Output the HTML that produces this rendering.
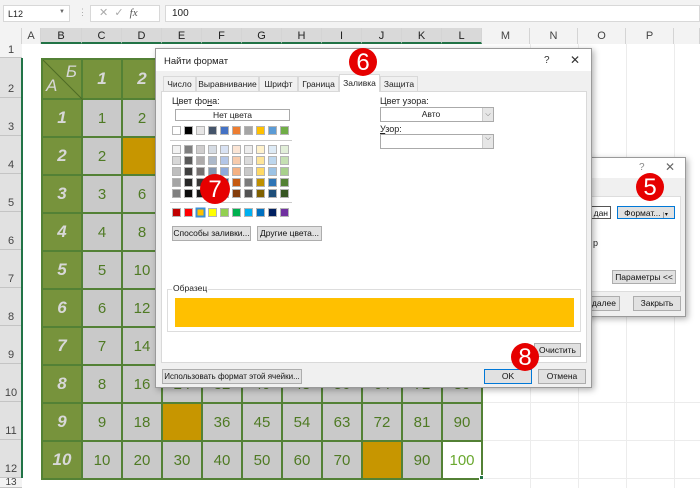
<!DOCTYPE html>
<html><head><meta charset="utf-8"><style>
*{box-sizing:border-box;margin:0;padding:0}
body{width:700px;height:488px;overflow:hidden;background:#fff;font-family:"Liberation Sans",sans-serif;position:relative;font-size:9px;color:#222}
.a{position:absolute;white-space:nowrap}
.top{left:0;top:0;width:700px;height:28px;background:#f3f3f3}
.box{background:#fff;border:1px solid #d8d8d8}
.ch{top:28px;height:16px;background:#f3f3f3;border-right:1px solid #d4d4d4;font-size:11px;color:#444;text-align:center;line-height:16px}
.chs{background:#d9d9d9;border-bottom:2px solid #217346;color:#222}
.rh{left:0;width:22px;background:#e1e1e1;border-bottom:1px solid #c4c4c4;font-size:11px;color:#444;text-align:center}
.gl{background:#ececec}
table.t{position:absolute;left:41px;top:58px;border-collapse:collapse;border:2px solid #538135}
table.t td{border:2px solid #538135;width:40px;height:38px;background:#c9c9c9;color:#4f7a24;font-size:15px;text-align:center;padding:0}
table.t td.g{background:#77933c;color:#d8d8d8;font-style:italic;font-weight:bold;font-size:17px}
table.t td.o{background:#c79600}
table.t td.w{background:#fff;color:#6aa82f}
.dlg{background:#f0f0f0;border:1px solid #9a9a9a;box-shadow:2px 2px 6px rgba(0,0,0,.3)}
.btn{background:#e1e1e1;border:1px solid #adadad;text-align:center;font-size:8.5px;line-height:13px;color:#111}
.tab{top:76px;height:15px;border:1px solid #d9d9d9;border-bottom:none;background:#f0f0f0;font-size:8.5px;text-align:center;line-height:14px}
.badge{width:28px;height:28px;border-radius:50%;background:#e60000;color:#fff;font-size:24px;text-align:center;line-height:29px}
</style></head><body>
<div class="a top"></div>
<div class="a box" style="left:3px;top:5px;width:67px;height:17px;font-size:9px;padding:3px 4px">L12<span style="position:absolute;right:4px;top:3px;font-size:6px;color:#666">▼</span></div>
<div class="a" style="left:78px;top:7px;color:#aaa;font-size:9px">⋮</div>
<div class="a box" style="left:90px;top:5px;width:70px;height:17px;color:#aaa;font-size:11px;padding-left:8px;line-height:15px">✕ &nbsp;✓ &nbsp;<i style="color:#555;font-family:'Liberation Serif'">fx</i></div>
<div class="a box" style="left:165px;top:5px;width:535px;height:17px;font-size:10px;padding:2px 6px">100</div>
<div class="a ch" style="left:0;width:22px;background:#f3f3f3"></div>
<div class="a ch" style="left:22px;width:19px">A</div>
<div class="a ch chs" style="left:41px;width:41px">B</div>
<div class="a ch chs" style="left:82px;width:40px">C</div>
<div class="a ch chs" style="left:122px;width:40px">D</div>
<div class="a ch chs" style="left:162px;width:40px">E</div>
<div class="a ch chs" style="left:202px;width:40px">F</div>
<div class="a ch chs" style="left:242px;width:40px">G</div>
<div class="a ch chs" style="left:282px;width:40px">H</div>
<div class="a ch chs" style="left:322px;width:40px">I</div>
<div class="a ch chs" style="left:362px;width:40px">J</div>
<div class="a ch chs" style="left:402px;width:40px">K</div>
<div class="a ch chs" style="left:442px;width:40px">L</div>
<div class="a ch" style="left:482px;width:48px">M</div>
<div class="a ch" style="left:530px;width:48px">N</div>
<div class="a ch" style="left:578px;width:48px">O</div>
<div class="a ch" style="left:626px;width:48px">P</div>
<div class="a ch" style="left:674px;width:26px"></div>
<div class="a rh" style="top:44px;height:14px;background:#f3f3f3">1</div>
<div class="a rh" style="top:58px;height:40px;padding-top:25px">2</div>
<div class="a rh" style="top:98px;height:38px;padding-top:23px">3</div>
<div class="a rh" style="top:136px;height:38px;padding-top:23px">4</div>
<div class="a rh" style="top:174px;height:38px;padding-top:23px">5</div>
<div class="a rh" style="top:212px;height:38px;padding-top:23px">6</div>
<div class="a rh" style="top:250px;height:38px;padding-top:23px">7</div>
<div class="a rh" style="top:288px;height:38px;padding-top:23px">8</div>
<div class="a rh" style="top:326px;height:38px;padding-top:23px">9</div>
<div class="a rh" style="top:364px;height:38px;padding-top:23px">10</div>
<div class="a rh" style="top:402px;height:38px;padding-top:23px">11</div>
<div class="a rh" style="top:440px;height:38px;padding-top:23px">12</div>
<div class="a rh" style="top:478px;height:10px;background:#f3f3f3;line-height:10px;font-size:10px">13</div>
<div class="a" style="left:21px;top:58px;width:2px;height:420px;background:#217346"></div>
<div class="a gl" style="left:530px;top:44px;width:1px;height:444px"></div>
<div class="a gl" style="left:578px;top:44px;width:1px;height:444px"></div>
<div class="a gl" style="left:626px;top:44px;width:1px;height:444px"></div>
<div class="a gl" style="left:674px;top:44px;width:1px;height:444px"></div>
<div class="a gl" style="left:482px;top:440px;width:218px;height:1px"></div>
<div class="a gl" style="left:482px;top:402px;width:218px;height:1px"></div>
<div class="a gl" style="left:482px;top:478px;width:218px;height:1px"></div>
<table class="t">
<tr><td class="g" style="position:relative;height:40px"><svg class="a" style="left:0;top:0" width="40" height="40"><line x1="0" y1="0" x2="40" y2="40" stroke="#4f6b25" stroke-width="1"/></svg><span class="a" style="right:4px;top:2px;font-weight:normal">Б</span><span class="a" style="left:3px;bottom:2px;font-weight:normal">А</span></td><td class="g">1</td><td class="g">2</td><td class="g">3</td><td class="g">4</td><td class="g">5</td><td class="g">6</td><td class="g">7</td><td class="g">8</td><td class="g">9</td><td class="g">10</td></tr>
<tr><td class="g">1</td><td>1</td><td>2</td><td>3</td><td>4</td><td>5</td><td>6</td><td>7</td><td>8</td><td>9</td><td>10</td></tr>
<tr><td class="g">2</td><td>2</td><td class="o"></td><td>6</td><td>8</td><td>10</td><td>12</td><td>14</td><td>16</td><td>18</td><td>20</td></tr>
<tr><td class="g">3</td><td>3</td><td>6</td><td>9</td><td>12</td><td>15</td><td>18</td><td>21</td><td>24</td><td>27</td><td>30</td></tr>
<tr><td class="g">4</td><td>4</td><td>8</td><td>12</td><td>16</td><td>20</td><td>24</td><td>28</td><td>32</td><td>36</td><td>40</td></tr>
<tr><td class="g">5</td><td>5</td><td>10</td><td>15</td><td>20</td><td>25</td><td>30</td><td>35</td><td>40</td><td>45</td><td>50</td></tr>
<tr><td class="g">6</td><td>6</td><td>12</td><td>18</td><td>24</td><td>30</td><td>36</td><td>42</td><td>48</td><td>54</td><td>60</td></tr>
<tr><td class="g">7</td><td>7</td><td>14</td><td>21</td><td>28</td><td>35</td><td>42</td><td>49</td><td>56</td><td>63</td><td>70</td></tr>
<tr><td class="g">8</td><td>8</td><td>16</td><td>24</td><td>32</td><td>40</td><td>48</td><td>56</td><td>64</td><td>72</td><td>80</td></tr>
<tr><td class="g">9</td><td>9</td><td>18</td><td class="o"></td><td>36</td><td>45</td><td>54</td><td>63</td><td>72</td><td>81</td><td>90</td></tr>
<tr><td class="g">10</td><td>10</td><td>20</td><td>30</td><td>40</td><td>50</td><td>60</td><td>70</td><td class="o"></td><td>90</td><td class="w">100</td></tr>
</table>
<div class="a" style="left:479px;top:475px;width:5px;height:5px;background:#217346;border:1px solid #fff"></div>

<div class="a dlg" style="left:560px;top:157px;width:126px;height:160px;background:#f0f0f0">
 <div class="a" style="left:0;top:0;width:124px;height:20px;background:#fff"></div>
 <div class="a" style="left:78px;top:4px;color:#888;font-size:10px">?</div>
 <div class="a" style="left:104px;top:2px;color:#666;font-size:12px">✕</div>
 <div class="a" style="left:0;top:38px;width:120px;height:96px;background:#fff;border:1px solid #ddd"></div>
 <div class="a btn" style="left:20px;top:48px;width:30px;height:13px;background:#fff;border-color:#555;text-align:right;padding-right:2px">дан</div>
 <div class="a btn" style="left:56px;top:48px;width:58px;height:13px;border:1px solid #0078d7">Формат... <span style="border-left:1px solid #999;padding-left:1px;font-size:6px">▾</span></div>
 <div class="a" style="left:32px;top:80px;font-size:9px">р</div>
 <div class="a btn" style="left:51px;top:112px;width:64px;height:14px">Параметры &lt;&lt;</div>
 <div class="a btn" style="left:20px;top:138px;width:39px;height:15px;text-align:right;padding-right:3px">далее</div>
 <div class="a btn" style="left:72px;top:138px;width:48px;height:15px">Закрыть</div>
</div>
<div class="a dlg" style="left:155px;top:48px;width:437px;height:340px">
 <div class="a" style="left:0;top:0;width:435px;height:22px;background:#fff"></div>
 <div class="a" style="left:8px;top:7px;font-size:9.5px">Найти формат</div>
 <div class="a" style="left:388px;top:6px;font-size:10px;color:#333">?</div>
 <div class="a" style="left:414px;top:4px;font-size:12px;color:#333">✕</div>
 <div class="a" style="left:5px;top:42px;width:426px;height:272px;background:#fff;border:1px solid #d9d9d9"></div>
</div>
<div class="a tab" style="left:163px;width:33px">Число</div>
<div class="a tab" style="left:196px;width:63px">Выравнивание</div>
<div class="a tab" style="left:259px;width:39px">Шрифт</div>
<div class="a tab" style="left:298px;width:41px">Граница</div>
<div class="a tab" style="left:339px;top:74px;height:18px;width:41px;background:#fff;line-height:16px">Заливка</div>
<div class="a tab" style="left:380px;width:38px">Защита</div>
<div class="a" style="left:172px;top:96px;font-size:9px">Цвет фо<u>н</u>а:</div>
<div class="a" style="left:175px;top:109px;width:115px;height:12px;border:1px solid #aaa;font-size:8.5px;text-align:center;line-height:10px">Нет цвета</div>
<svg class="a" style="left:170px;top:124px" width="130" height="96">
<g stroke="#b5b5b5" stroke-width="1">
<rect x="2.5" y="2.5" width="8" height="8" fill="#fff"/><rect x="14.5" y="2.5" width="8" height="8" fill="#000"/><rect x="26.5" y="2.5" width="8" height="8" fill="#e7e6e6"/><rect x="38.5" y="2.5" width="8" height="8" fill="#44546a"/><rect x="50.5" y="2.5" width="8" height="8" fill="#4472c4"/><rect x="62.5" y="2.5" width="8" height="8" fill="#ed7d31"/><rect x="74.5" y="2.5" width="8" height="8" fill="#a5a5a5"/><rect x="86.5" y="2.5" width="8" height="8" fill="#ffc000"/><rect x="98.5" y="2.5" width="8" height="8" fill="#5b9bd5"/><rect x="110.5" y="2.5" width="8" height="8" fill="#70ad47"/>
</g>
<line x1="0" y1="16.5" x2="122" y2="16.5" stroke="#ccc"/>
<g stroke="#b5b5b5">
<rect x="2.5" y="21.5" width="8" height="8" fill="#f2f2f2"/><rect x="14.5" y="21.5" width="8" height="8" fill="#7f7f7f"/><rect x="26.5" y="21.5" width="8" height="8" fill="#d0cece"/><rect x="38.5" y="21.5" width="8" height="8" fill="#d6dce4"/><rect x="50.5" y="21.5" width="8" height="8" fill="#d9e2f3"/><rect x="62.5" y="21.5" width="8" height="8" fill="#fbe5d5"/><rect x="74.5" y="21.5" width="8" height="8" fill="#ededed"/><rect x="86.5" y="21.5" width="8" height="8" fill="#fff2cc"/><rect x="98.5" y="21.5" width="8" height="8" fill="#deebf6"/><rect x="110.5" y="21.5" width="8" height="8" fill="#e2efd9"/>
<rect x="2.5" y="32.5" width="8" height="8" fill="#d8d8d8"/><rect x="14.5" y="32.5" width="8" height="8" fill="#595959"/><rect x="26.5" y="32.5" width="8" height="8" fill="#aeabab"/><rect x="38.5" y="32.5" width="8" height="8" fill="#adb9ca"/><rect x="50.5" y="32.5" width="8" height="8" fill="#b4c6e7"/><rect x="62.5" y="32.5" width="8" height="8" fill="#f7cbac"/><rect x="74.5" y="32.5" width="8" height="8" fill="#dbdbdb"/><rect x="86.5" y="32.5" width="8" height="8" fill="#fee599"/><rect x="98.5" y="32.5" width="8" height="8" fill="#bdd7ee"/><rect x="110.5" y="32.5" width="8" height="8" fill="#c5e0b3"/>
<rect x="2.5" y="43.5" width="8" height="8" fill="#bfbfbf"/><rect x="14.5" y="43.5" width="8" height="8" fill="#3f3f3f"/><rect x="26.5" y="43.5" width="8" height="8" fill="#757070"/><rect x="38.5" y="43.5" width="8" height="8" fill="#8496b0"/><rect x="50.5" y="43.5" width="8" height="8" fill="#8eaadb"/><rect x="62.5" y="43.5" width="8" height="8" fill="#f4b183"/><rect x="74.5" y="43.5" width="8" height="8" fill="#c9c9c9"/><rect x="86.5" y="43.5" width="8" height="8" fill="#ffd965"/><rect x="98.5" y="43.5" width="8" height="8" fill="#9cc3e5"/><rect x="110.5" y="43.5" width="8" height="8" fill="#a8d08d"/>
<rect x="2.5" y="54.5" width="8" height="8" fill="#a5a5a5"/><rect x="14.5" y="54.5" width="8" height="8" fill="#262626"/><rect x="26.5" y="54.5" width="8" height="8" fill="#3a3838"/><rect x="38.5" y="54.5" width="8" height="8" fill="#323f4f"/><rect x="50.5" y="54.5" width="8" height="8" fill="#2f5496"/><rect x="62.5" y="54.5" width="8" height="8" fill="#c55a11"/><rect x="74.5" y="54.5" width="8" height="8" fill="#7b7b7b"/><rect x="86.5" y="54.5" width="8" height="8" fill="#bf9000"/><rect x="98.5" y="54.5" width="8" height="8" fill="#2e75b5"/><rect x="110.5" y="54.5" width="8" height="8" fill="#538135"/>
<rect x="2.5" y="65.5" width="8" height="8" fill="#7f7f7f"/><rect x="14.5" y="65.5" width="8" height="8" fill="#0c0c0c"/><rect x="26.5" y="65.5" width="8" height="8" fill="#171616"/><rect x="38.5" y="65.5" width="8" height="8" fill="#222a35"/><rect x="50.5" y="65.5" width="8" height="8" fill="#1f3864"/><rect x="62.5" y="65.5" width="8" height="8" fill="#833c0b"/><rect x="74.5" y="65.5" width="8" height="8" fill="#525252"/><rect x="86.5" y="65.5" width="8" height="8" fill="#7f6000"/><rect x="98.5" y="65.5" width="8" height="8" fill="#1e4e79"/><rect x="110.5" y="65.5" width="8" height="8" fill="#375623"/>
</g>
<line x1="0" y1="78.5" x2="122" y2="78.5" stroke="#ccc"/>
<g stroke="#b5b5b5">
<rect x="2.5" y="84.5" width="8" height="8" fill="#c00000"/><rect x="14.5" y="84.5" width="8" height="8" fill="#ff0000"/><rect x="26.5" y="84.5" width="8" height="8" fill="#ffc000" stroke="#3c8fd6" stroke-width="2"/><rect x="38.5" y="84.5" width="8" height="8" fill="#ffff00"/><rect x="50.5" y="84.5" width="8" height="8" fill="#92d050"/><rect x="62.5" y="84.5" width="8" height="8" fill="#00b050"/><rect x="74.5" y="84.5" width="8" height="8" fill="#00b0f0"/><rect x="86.5" y="84.5" width="8" height="8" fill="#0070c0"/><rect x="98.5" y="84.5" width="8" height="8" fill="#002060"/><rect x="110.5" y="84.5" width="8" height="8" fill="#7030a0"/>
</g></svg>
<div class="a btn" style="left:172px;top:226px;width:79px;height:15px;line-height:13px">Способы заливки...</div>
<div class="a btn" style="left:257px;top:226px;width:65px;height:15px;line-height:13px">Другие цвета...</div>
<div class="a" style="left:380px;top:96px;font-size:9px">Цвет узора:</div>
<div class="a" style="left:380px;top:107px;width:114px;height:15px;border:1px solid #aaa;background:#fff;font-size:8.5px;line-height:13px;text-align:center;padding-right:12px">Авто<span class="a" style="right:0;top:0;width:11px;height:13px;background:#e6e6e6;border-left:1px solid #ccc;font-size:7px;color:#555">⌵</span></div>
<div class="a" style="left:380px;top:124px;font-size:9px"><u>У</u>зор:</div>
<div class="a" style="left:380px;top:134px;width:114px;height:15px;border:1px solid #aaa;background:#fff"><span class="a" style="right:0;top:0;width:11px;height:13px;background:#e6e6e6;border-left:1px solid #ccc;font-size:7px;color:#555;text-align:center">⌵</span></div>
<div class="a" style="left:167px;top:289px;width:414px;height:43px;border:1px solid #ddd"></div>
<div class="a" style="left:172px;top:283px;font-size:8.5px;background:#fff;padding:0 1px">Образец</div>
<div class="a" style="left:175px;top:298px;width:399px;height:29px;background:#ffc000"></div>
<div class="a btn" style="left:534px;top:343px;width:47px;height:14px">Очистить</div>
<div class="a btn" style="left:162px;top:369px;width:140px;height:15px;font-size:8px">Использовать формат этой ячейки...</div>
<div class="a btn" style="left:484px;top:369px;width:48px;height:15px;border:1px solid #0078d7">OK</div>
<div class="a btn" style="left:538px;top:369px;width:48px;height:15px">Отмена</div>
<div class="a badge" style="left:349px;top:48px">6</div>
<div class="a badge" style="left:200px;top:174px;width:30px;height:30px;line-height:31px">7</div>
<div class="a badge" style="left:511px;top:343px">8</div>
<div class="a badge" style="left:636px;top:173px">5</div>
</body></html>
